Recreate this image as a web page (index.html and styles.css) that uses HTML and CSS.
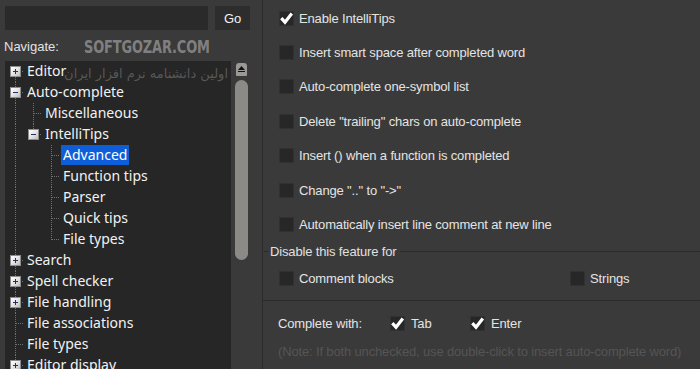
FILE: index.html
```html
<!DOCTYPE html>
<html>
<head>
<meta charset="utf-8">
<link rel="stylesheet" href="styles.css">
</head>
<body>
<div class="app">
  <aside class="nav">
    <div class="search">
      <div class="input"></div>
      <div class="go">Go</div>
    </div>
    <div class="nav-label">Navigate:</div>
    <div class="tree-wrap">
      <ul class="tree">
        <li class="row"><span class="g f"><i class="box plus"></i></span><span class="lbl">Editor</span></li>
        <li class="row"><span class="g t"><i class="box minus"></i></span><span class="lbl">Auto-complete</span></li>
        <li class="row"><span class="g v"></span><span class="g t"></span><span class="lbl">Miscellaneous</span></li>
        <li class="row"><span class="g v"></span><span class="g l"><i class="box minus"></i></span><span class="lbl">IntelliTips</span></li>
        <li class="row"><span class="g v"></span><span class="g"></span><span class="g t"></span><span class="lbl sel">Advanced</span></li>
        <li class="row"><span class="g v"></span><span class="g"></span><span class="g t"></span><span class="lbl">Function tips</span></li>
        <li class="row"><span class="g v"></span><span class="g"></span><span class="g t"></span><span class="lbl">Parser</span></li>
        <li class="row"><span class="g v"></span><span class="g"></span><span class="g t"></span><span class="lbl">Quick tips</span></li>
        <li class="row"><span class="g v"></span><span class="g"></span><span class="g l"></span><span class="lbl">File types</span></li>
        <li class="row"><span class="g t"><i class="box plus"></i></span><span class="lbl">Search</span></li>
        <li class="row"><span class="g t"><i class="box plus"></i></span><span class="lbl">Spell checker</span></li>
        <li class="row"><span class="g t"><i class="box plus"></i></span><span class="lbl">File handling</span></li>
        <li class="row"><span class="g t"></span><span class="lbl">File associations</span></li>
        <li class="row"><span class="g t"></span><span class="lbl">File types</span></li>
        <li class="row"><span class="g t"><i class="box plus"></i></span><span class="lbl">Editor display</span></li>
      </ul>
      <div class="vscroll">
        <div class="sb-up"><svg width="11" height="13" viewBox="0 0 11 13"><path d="M5.5 3 L9 7 L2 7 Z" fill="#111"/><rect x="2" y="8" width="7" height="1" fill="#111"/></svg></div>
        <div class="sb-thumb"></div>
      </div>
    </div>
    <div class="wm-latin">SOFTGOZAR.COM</div>
    <div class="wm-fa" dir="rtl">اولین دانشنامه نرم افزار ایران</div>
  </aside>
  <main class="opts">
    <div class="opt-list">
      <div class="opt"><span class="cb on"><svg width="15" height="15" viewBox="0 0 15 15"><path d="M2.3 7.2 L6 11.2 L12.8 2.6" fill="none" stroke="#fff" stroke-width="3.2"/></svg></span><span>Enable IntelliTips</span></div>
      <div class="opt"><span class="cb"></span><span>Insert smart space after completed word</span></div>
      <div class="opt"><span class="cb"></span><span>Auto-complete one-symbol list</span></div>
      <div class="opt"><span class="cb"></span><span>Delete "trailing" chars on auto-complete</span></div>
      <div class="opt"><span class="cb"></span><span>Insert () when a function is completed</span></div>
      <div class="opt"><span class="cb"></span><span>Change ".." to "-&gt;"</span></div>
      <div class="opt"><span class="cb"></span><span>Automatically insert line comment at new line</span></div>
    </div>
    <div class="group">
      <div class="group-head"><span class="gh-text">Disable this feature for</span></div>
      <div class="group-body">
        <div class="opt"><span class="cb"></span><span>Comment blocks</span></div>
        <div class="opt"><span class="cb"></span><span>Strings</span></div>
      </div>
    </div>
    <div class="complete">
      <span class="cw-label">Complete with:</span>
      <span class="cw-item tab"><span class="cb on"><svg width="15" height="15" viewBox="0 0 15 15"><path d="M2.3 7.2 L6 11.2 L12.8 2.6" fill="none" stroke="#fff" stroke-width="3.2"/></svg></span><span>Tab</span></span>
      <span class="cw-item"><span class="cb on"><svg width="15" height="15" viewBox="0 0 15 15"><path d="M2.3 7.2 L6 11.2 L12.8 2.6" fill="none" stroke="#fff" stroke-width="3.2"/></svg></span><span>Enter</span></span>
    </div>
    <div class="note">(Note: If both unchecked, use double-click to insert auto-complete word)</div>
  </main>
</div>
</body>
</html>
```

FILE: styles.css
```css
html, body {
  margin: 0;
  padding: 0;
  width: 700px;
  height: 369px;
  overflow: hidden;
}
body {
  font-family: "Liberation Sans", Arial, sans-serif;
  font-size: 13px;
  color: #e4e4e4;
  background: #3a3a3a;
}
.app {
  display: flex;
  height: 369px;
  background: repeating-conic-gradient(#383838 0 25%, #3c3c3c 0 50%) 0 0 / 2px 2px;
}
.nav {
  position: relative;
  width: 263px;
  flex: none;
  box-sizing: border-box;
  padding: 6px 12px 0 5px;
  border-right: 1px solid #2b2b2b;
  display: flex;
  flex-direction: column;
  overflow: hidden;
}
.search {
  display: flex;
  gap: 7px;
  height: 24px;
}
.input {
  width: 204px;
  background: #2a2a2a;
}
.go {
  width: 35px;
  background: #2d2d2d;
  color: #f2f2f2;
  display: flex;
  align-items: center;
  justify-content: center;
}
.nav-label {
  margin: 9px 0 7px -1px;
  height: 15px;
  line-height: 15px;
  color: #e2e2e2;
}
.tree-wrap {
  display: flex;
  flex: 1;
  min-height: 0;
}
.tree {
  list-style: none;
  margin: 0;
  padding: 0 0 0 1px;
  width: 226px;
  box-sizing: border-box;
  background: #262626;
  font-family: "Noto Sans", "Open Sans", sans-serif;
  font-size: 14px;
  color: #f2f2f2;
  overflow: hidden;
}
.row {
  display: flex;
  height: 21px;
  line-height: 20px;
  white-space: nowrap;
}
.g {
  --dv: repeating-linear-gradient(to bottom, #707070 0 1px, transparent 1px 2px);
  --dh: repeating-linear-gradient(to right, #707070 0 1px, transparent 1px 2px);
  position: relative;
  flex: none;
  width: 18px;
  height: 21px;
  background-repeat: no-repeat;
}
.g.v {
  background-image: var(--dv);
  background-size: 1px 100%;
  background-position: 9px 0;
}
.g.t {
  background-image: var(--dv), var(--dh);
  background-size: 1px 100%, 9px 1px;
  background-position: 9px 0, 10px 10px;
}
.g.l {
  background-image: var(--dv), var(--dh);
  background-size: 1px 11px, 9px 1px;
  background-position: 9px 0, 10px 10px;
}
.g.f {
  background-image: var(--dv), var(--dh);
  background-size: 1px 11px, 9px 1px;
  background-position: 9px 10px, 10px 10px;
}
.box {
  position: absolute;
  left: 4px;
  top: 5px;
  width: 11px;
  height: 11px;
  box-sizing: border-box;
  border: 1px solid #8e8e8e;
  background: linear-gradient(135deg, #ffffff 0%, #e4e4e4 50%, #bdbdbd 100%);
}
.box::before {
  content: "";
  position: absolute;
  left: 2px;
  top: 4px;
  width: 5px;
  height: 1px;
  background: #27305a;
}
.box.plus::after {
  content: "";
  position: absolute;
  left: 4px;
  top: 2px;
  width: 1px;
  height: 5px;
  background: #27305a;
}
.lbl {
  margin-left: 1px;
  padding: 0 2px;
  height: 20px;
}
.lbl.sel {
  background: #0d5ed8;
  color: #ffffff;
}
.vscroll {
  width: 19px;
  flex: none;
  display: flex;
  flex-direction: column;
  padding: 2px 0 0 4px;
  box-sizing: border-box;
}
.sb-up {
  width: 11px;
  height: 13px;
  margin-left: 1px;
  background: #9a9996;
  border-radius: 3px 3px 1px 1px;
  display: flex;
}
.sb-thumb {
  margin-top: 4px;
  width: 13px;
  height: 180px;
  background: #8b8a87;
  border-radius: 6.5px;
}
.wm-latin {
  position: absolute;
  left: 84px;
  top: 36px;
  font-family: "DejaVu Sans", sans-serif;
  font-weight: bold;
  font-size: 18px;
  letter-spacing: -0.2px;
  color: rgba(165, 165, 165, 0.68);
  transform: scaleX(0.72);
  transform-origin: 0 0;
  white-space: nowrap;
}
.wm-fa {
  position: absolute;
  left: 88px;
  top: 66px;
  width: 140px;
  font-family: "DejaVu Sans", sans-serif;
  font-size: 13px;
  color: rgba(130, 130, 130, 0.55);
  white-space: nowrap;
}
.opts {
  flex: 1;
  display: flex;
  flex-direction: column;
  letter-spacing: -0.15px;
}
.opt-list {
  padding: 1px 0 0 16px;
}
.opt {
  display: flex;
  align-items: center;
  gap: 5px;
  height: 34.4px;
  white-space: nowrap;
}
.cb {
  width: 15px;
  height: 15px;
  flex: none;
  box-sizing: border-box;
  background: #272727;
  border: 1px solid #313131;
  display: flex;
}
.cb svg {
  margin: -1px;
}
.group-head {
  display: flex;
  align-items: center;
  height: 18px;
  margin-top: 1px;
}
.group-head::before {
  content: "";
  width: 5px;
  margin-left: 1px;
  height: 1px;
  background: #2c2c2c;
}
.group-head::after {
  content: "";
  flex: 1;
  height: 1px;
  background: #2c2c2c;
  margin-left: 4px;
}
.gh-text {
  margin-left: 1px;
  color: #e0e0e0;
}
.group-body {
  display: grid;
  grid-template-columns: 291px auto;
  padding: 1px 0 4px 16px;
  height: 34px;
  border-bottom: 1px solid #2b2b2b;
}
.group-body .opt {
  height: 34px;
}
.complete {
  display: flex;
  align-items: center;
  height: 22px;
  margin-top: 12px;
  padding-left: 15px;
  white-space: nowrap;
}
.cw-label {
  width: 112px;
  flex: none;
}
.cw-item {
  display: flex;
  align-items: center;
  gap: 6px;
}
.cw-item.tab {
  width: 80px;
}
.note {
  margin-top: 9px;
  padding-left: 15px;
  height: 16px;
  line-height: 16px;
  color: #555555;
  white-space: nowrap;
}
```
